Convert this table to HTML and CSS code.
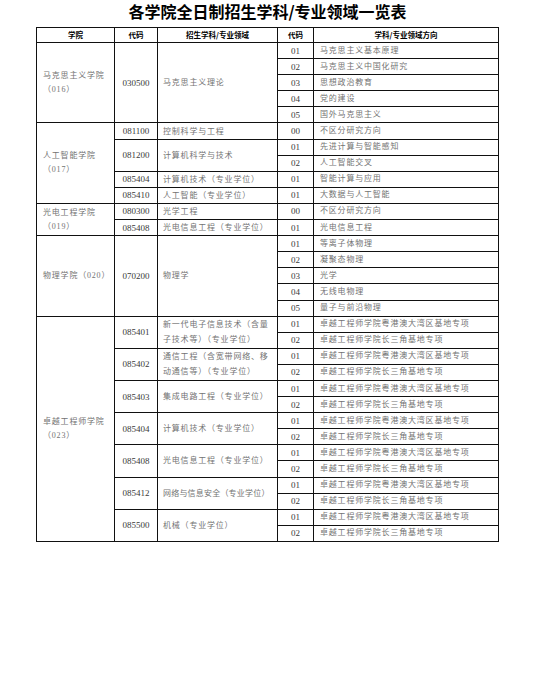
FILE: index.html
```html
<!DOCTYPE html>
<html lang="zh">
<head>
<meta charset="utf-8">
<link rel="stylesheet" href="styles.css">
</head>
<body>
<h1 class="title">各学院全日制招生学科/专业领域一览表</h1>
<table class="grid">
  <colgroup>
    <col class="c-college"><col class="c-code"><col class="c-subject"><col class="c-code2"><col class="c-dir">
  </colgroup>
  <thead>
    <tr class="head">
      <th>学院</th><th>代码</th><th>招生学科/专业领域</th><th>代码</th><th>学科/专业领域方向</th>
    </tr>
  </thead>
  <tbody>
    <tr>
      <td class="college" rowspan="5">马克思主义学院<br>（016）</td>
      <td class="num" rowspan="5">030500</td>
      <td class="subj" rowspan="5">马克思主义理论</td>
      <td class="num">01</td><td class="dir">马克思主义基本原理</td>
    </tr>
    <tr><td class="num">02</td><td class="dir">马克思主义中国化研究</td></tr>
    <tr><td class="num">03</td><td class="dir">思想政治教育</td></tr>
    <tr><td class="num">04</td><td class="dir">党的建设</td></tr>
    <tr><td class="num">05</td><td class="dir">国外马克思主义</td></tr>

    <tr>
      <td class="college" rowspan="5">人工智能学院<br>（017）</td>
      <td class="num">081100</td><td class="subj">控制科学与工程</td>
      <td class="num">00</td><td class="dir">不区分研究方向</td>
    </tr>
    <tr>
      <td class="num" rowspan="2">081200</td><td class="subj" rowspan="2">计算机科学与技术</td>
      <td class="num">01</td><td class="dir">先进计算与智能感知</td>
    </tr>
    <tr><td class="num">02</td><td class="dir">人工智能交叉</td></tr>
    <tr>
      <td class="num">085404</td><td class="subj">计算机技术（专业学位）</td>
      <td class="num">01</td><td class="dir">智能计算与应用</td>
    </tr>
    <tr>
      <td class="num">085410</td><td class="subj">人工智能（专业学位）</td>
      <td class="num">01</td><td class="dir">大数据与人工智能</td>
    </tr>

    <tr>
      <td class="college" rowspan="2">光电工程学院<br>（019）</td>
      <td class="num">080300</td><td class="subj">光学工程</td>
      <td class="num">00</td><td class="dir">不区分研究方向</td>
    </tr>
    <tr>
      <td class="num">085408</td><td class="subj">光电信息工程（专业学位）</td>
      <td class="num">01</td><td class="dir">光电信息工程</td>
    </tr>

    <tr>
      <td class="college" rowspan="5">物理学院（020）</td>
      <td class="num" rowspan="5">070200</td>
      <td class="subj" rowspan="5">物理学</td>
      <td class="num">01</td><td class="dir">等离子体物理</td>
    </tr>
    <tr><td class="num">02</td><td class="dir">凝聚态物理</td></tr>
    <tr><td class="num">03</td><td class="dir">光学</td></tr>
    <tr><td class="num">04</td><td class="dir">无线电物理</td></tr>
    <tr><td class="num">05</td><td class="dir">量子与前沿物理</td></tr>

    <tr>
      <td class="college" rowspan="14">卓越工程师学院<br>（023）</td>
      <td class="num" rowspan="2">085401</td>
      <td class="subj wrap" rowspan="2">新一代电子信息技术（含量子技术等）（专业学位）</td>
      <td class="num">01</td><td class="dir">卓越工程师学院粤港澳大湾区基地专项</td>
    </tr>
    <tr><td class="num">02</td><td class="dir">卓越工程师学院长三角基地专项</td></tr>
    <tr>
      <td class="num" rowspan="2">085402</td>
      <td class="subj wrap" rowspan="2">通信工程（含宽带网络、移动通信等）（专业学位）</td>
      <td class="num">01</td><td class="dir">卓越工程师学院粤港澳大湾区基地专项</td>
    </tr>
    <tr><td class="num">02</td><td class="dir">卓越工程师学院长三角基地专项</td></tr>
    <tr>
      <td class="num" rowspan="2">085403</td>
      <td class="subj" rowspan="2">集成电路工程（专业学位）</td>
      <td class="num">01</td><td class="dir">卓越工程师学院粤港澳大湾区基地专项</td>
    </tr>
    <tr><td class="num">02</td><td class="dir">卓越工程师学院长三角基地专项</td></tr>
    <tr>
      <td class="num" rowspan="2">085404</td>
      <td class="subj" rowspan="2">计算机技术（专业学位）</td>
      <td class="num">01</td><td class="dir">卓越工程师学院粤港澳大湾区基地专项</td>
    </tr>
    <tr><td class="num">02</td><td class="dir">卓越工程师学院长三角基地专项</td></tr>
    <tr>
      <td class="num" rowspan="2">085408</td>
      <td class="subj" rowspan="2">光电信息工程（专业学位）</td>
      <td class="num">01</td><td class="dir">卓越工程师学院粤港澳大湾区基地专项</td>
    </tr>
    <tr><td class="num">02</td><td class="dir">卓越工程师学院长三角基地专项</td></tr>
    <tr>
      <td class="num" rowspan="2">085412</td>
      <td class="subj tight" rowspan="2">网络与信息安全（专业学位）</td>
      <td class="num">01</td><td class="dir">卓越工程师学院粤港澳大湾区基地专项</td>
    </tr>
    <tr><td class="num">02</td><td class="dir">卓越工程师学院长三角基地专项</td></tr>
    <tr>
      <td class="num" rowspan="2">085500</td>
      <td class="subj" rowspan="2">机械（专业学位）</td>
      <td class="num">01</td><td class="dir">卓越工程师学院粤港澳大湾区基地专项</td>
    </tr>
    <tr><td class="num">02</td><td class="dir">卓越工程师学院长三角基地专项</td></tr>
  </tbody>
</table>
</body>
</html>
```

FILE: styles.css
```css
html, body {
  margin: 0;
  padding: 0;
  background: #fff;
}

body {
  font-family: "Liberation Serif", "Noto Sans CJK SC", serif;
}

.title {
  margin: 0 0 4px;
  text-align: center;
  font-family: "Noto Sans CJK SC", sans-serif;
  font-weight: 700;
  font-size: 16px;
  line-height: 23px;
  color: #000;
}

.grid {
  margin: 0 auto;
  width: 462px;
  table-layout: fixed;
  border-collapse: collapse;
  border: 1px solid #000;
}

.c-college { width: 78px; }
.c-code { width: 43px; }
.c-subject { width: 120px; }
.c-code2 { width: 36px; }
.c-dir { width: 185px; }

.grid th,
.grid td {
  border: 1px solid #111;
  padding: 0;
  vertical-align: middle;
}

.head th {
  height: 14px;
  font-family: "Noto Sans CJK SC", sans-serif;
  font-weight: 700;
  font-size: 7.5px;
  line-height: 10px;
  color: #000;
  text-align: center;
}

.grid tbody tr {
  height: 16.1px;
}

.grid td {
  font-size: 8px;
  line-height: 14px;
  color: #737373;
  letter-spacing: 0.8px;
}

.grid td.num {
  text-align: center;
  font-family: "Liberation Serif", serif;
  font-size: 9px;
  letter-spacing: 0;
  color: #3a3a3a;
}

.grid td.college {
  padding: 0 4px 0 6px;
  line-height: 14px;
}

.grid td.subj {
  padding: 0 3px 0 5px;
  line-height: 15px;
}

.grid td.subj.tight {
  white-space: nowrap;
  letter-spacing: 0.2px;
}

.grid td.dir {
  padding: 0 4px 0 6px;
  line-height: 12px;
}
```
